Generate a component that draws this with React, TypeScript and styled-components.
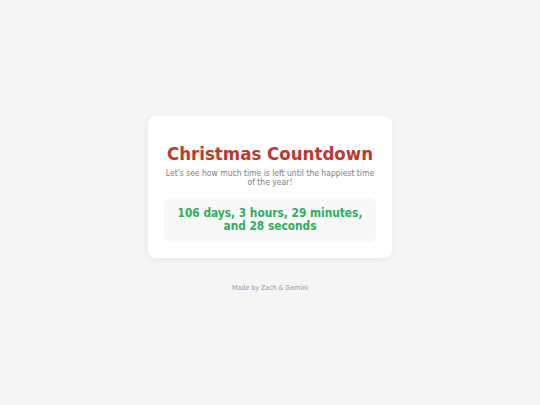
import React from 'react';
import styled, { createGlobalStyle } from 'styled-components';

const GlobalStyle = createGlobalStyle`
  html, body {
    margin: 0;
    padding: 0;
    background: #f4f5f4;
    font-family: "DejaVu Sans Condensed", "DejaVu Sans", Verdana, sans-serif;
    font-stretch: condensed;
  }
`

const Page = styled.div`
  height: 405px;
  display: flex;
  flex-direction: column;
  align-items: center;
  justify-content: center;
`

const Card = styled.div`
  width: 244px;
  box-sizing: border-box;
  margin-top: 2px;
  padding: 27px 16px 16px;
  background: #fff;
  border-radius: 8px;
  box-shadow: 0 2px 8px rgba(0, 0, 0, 0.06);
  text-align: center;
`

const Title = styled.h1`
  margin: 0 0 4px;
  font-size: 18.5px;
  line-height: 22px;
  font-weight: bold;
  color: #bb3a2e;
`

const Subtitle = styled.p`
  margin: 0 0 10px;
  font-size: 8.5px;
  line-height: 9.5px;
  color: #808080;
`

const Timer = styled.div`
  padding: 9px 6px;
  background: #f8f8f8;
  border-radius: 6px;
  font-size: 11.8px;
  line-height: 13px;
  font-weight: bold;
  color: #2fae62;
`

const Footer = styled.p`
  margin: 26px 0 0;
  font-size: 7px;
  color: #999;
`

export default function App() {
  return (
    <>
      <GlobalStyle />
      <Page>
        <Card>
          <Title>Christmas Countdown</Title>
          <Subtitle>Let's see how much time is left until the happiest time of the year!</Subtitle>
          <Timer>106 days, 3 hours, 29 minutes, and 28 seconds</Timer>
        </Card>
        <Footer>Made by Zach &amp; Gemini</Footer>
      </Page>
    </>
  );
}
